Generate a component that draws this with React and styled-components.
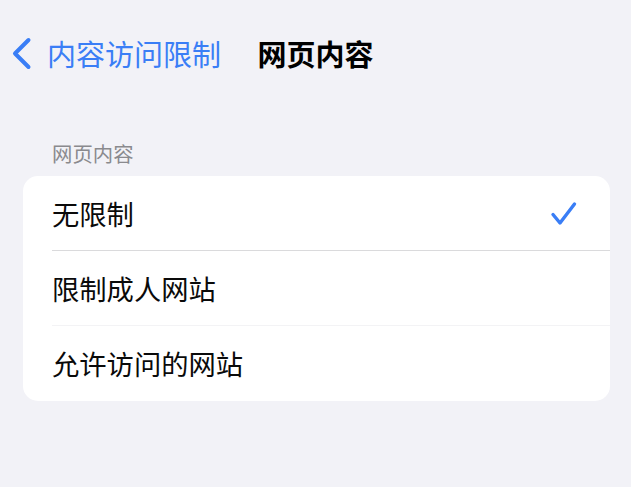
import React from "react";
import styled, { createGlobalStyle } from "styled-components";

const Global = createGlobalStyle`
  html, body { margin: 0; padding: 0; background: #f2f2f7; }
  body {
    font-family: "Noto Sans CJK SC", "Noto Sans", sans-serif;
    width: 631px; height: 487px; overflow: hidden;
  }
`;

const Page = styled.div`
  width: 631px;
  height: 487px;
  background: #f2f2f7;
  display: flex;
  flex-direction: column;
`;

const NavBar = styled.div`
  height: 106px;
  display: grid;
  grid-template-columns: 1fr auto 1fr;
  align-items: center;
`;

const Back = styled.div`
  display: flex;
  align-items: center;
  gap: 15px;
  padding-left: 11px;
  color: #3a7ef6;
  font-size: 29px;
  line-height: 34px;
  white-space: nowrap;
`;

const Title = styled.div`
  font-size: 29px;
  font-weight: 700;
  line-height: 34px;
  color: #000;
  white-space: nowrap;
`;

const Content = styled.div`
  padding: 0 21px 0 23px;
  display: flex;
  flex-direction: column;
`;

const SectionHeader = styled.div`
  margin-top: 37px;
  padding-left: 29px;
  font-size: 20.4px;
  line-height: 20px;
  height: 20px;
  color: #8a8a8e;
  margin-bottom: 13px;
`;

const Card = styled.div`
  background: #fff;
  border-radius: 15px;
  overflow: hidden;
`;

const Row = styled.div`
  height: 75px;
  padding-left: 29px;
  display: flex;
  flex-direction: column;
`;

const RowInner = styled.div`
  flex: 1;
  display: flex;
  align-items: center;
  justify-content: space-between;
  padding-right: 33px;
  font-size: 27.3px;
  color: #0a0a0a;
  border-bottom: 1px solid ${(p) => p.$sep || "transparent"};
`;

const Check = () => (
  <svg width="27" height="25" viewBox="0 0 27 25">
    <path
      d="M3 13.5 L10 22 L24.5 3"
      fill="none"
      stroke="#3a7ef6"
      strokeWidth="3.4"
      strokeLinecap="round"
      strokeLinejoin="round"
    />
  </svg>
);

const Chevron = () => (
  <svg width="21" height="33" viewBox="0 0 21 33">
    <path
      d="M17.5 3 L4 16.5 L17.5 30"
      fill="none"
      stroke="#3a7ef6"
      strokeWidth="4"
      strokeLinecap="round"
      strokeLinejoin="round"
    />
  </svg>
);

const items = [
  { label: "无限制", checked: true, sep: "#dadadc" },
  { label: "限制成人网站", sep: "#f3f3f5" },
  { label: "允许访问的网站" },
];

export default function App() {
  return (
    <>
      <Global />
      <Page>
        <NavBar>
          <Back>
            <Chevron />
            <span>内容访问限制</span>
          </Back>
          <Title>网页内容</Title>
          <div />
        </NavBar>
        <Content>
          <SectionHeader>网页内容</SectionHeader>
          <Card>
            {items.map((it) => (
              <Row key={it.label}>
                <RowInner $sep={it.sep}>
                  <span>{it.label}</span>
                  {it.checked && <Check />}
                </RowInner>
              </Row>
            ))}
          </Card>
        </Content>
      </Page>
    </>
  );
}
